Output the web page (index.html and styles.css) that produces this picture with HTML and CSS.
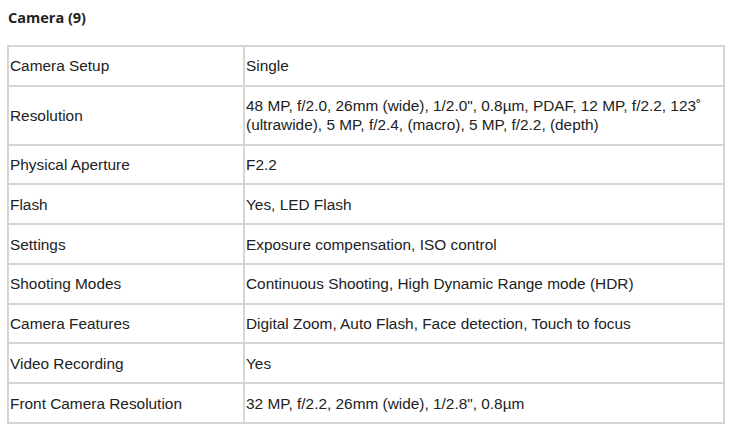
FILE: index.html
```html
<!DOCTYPE html>
<html lang="en">
<head>
<meta charset="utf-8">
<title>Camera</title>
<link rel="stylesheet" href="styles.css">
</head>
<body>
<div class="page">
  <h3 class="section-title">Camera (9)</h3>
  <table class="spec-table">
    <colgroup><col class="col-label"><col class="col-value"></colgroup>
    <tbody>
      <tr><td>Camera Setup</td><td>Single</td></tr>
      <tr><td>Resolution</td><td>48 MP, f/2.0, 26mm (wide), 1/2.0", 0.8µm, PDAF, 12 MP, f/2.2, 123˚ (ultrawide), 5 MP, f/2.4, (macro), 5 MP, f/2.2, (depth)</td></tr>
      <tr><td>Physical Aperture</td><td>F2.2</td></tr>
      <tr><td>Flash</td><td>Yes, LED Flash</td></tr>
      <tr><td>Settings</td><td>Exposure compensation, ISO control</td></tr>
      <tr><td>Shooting Modes</td><td>Continuous Shooting, High Dynamic Range mode (HDR)</td></tr>
      <tr><td>Camera Features</td><td>Digital Zoom, Auto Flash, Face detection, Touch to focus</td></tr>
      <tr><td>Video Recording</td><td>Yes</td></tr>
      <tr><td>Front Camera Resolution</td><td>32 MP, f/2.2, 26mm (wide), 1/2.8", 0.8µm</td></tr>
    </tbody>
  </table>
</div>
</body>
</html>
```
FILE: styles.css
```css
html, body {
  margin: 0;
  padding: 0;
  background: #ffffff;
}

.page {
  padding: 8px 6px 0 7px;
}

.section-title {
  margin: 0 0 17px 0;
  padding-left: 1px;
  font-family: "Open Sans", sans-serif;
  font-weight: 700;
  font-size: 14.5px;
  line-height: 20px;
  color: #222222;
}

.spec-table {
  width: 718px;
  border-collapse: separate;
  border-spacing: 0;
  border-left: 2px solid #d6d6d6;
  border-top: 2px solid #d6d6d6;
  table-layout: fixed;
  font-family: "Liberation Sans", Arial, sans-serif;
  font-size: 15.4px;
  line-height: 19px;
  color: #222222;
}

.col-label {
  width: 236px;
}

.col-value {
  width: 480px;
}

.spec-table td {
  padding: 9.4px 1px;
  border-right: 2px solid #d6d6d6;
  border-bottom: 2px solid #d6d6d6;
  vertical-align: middle;
  text-align: left;
}
```
